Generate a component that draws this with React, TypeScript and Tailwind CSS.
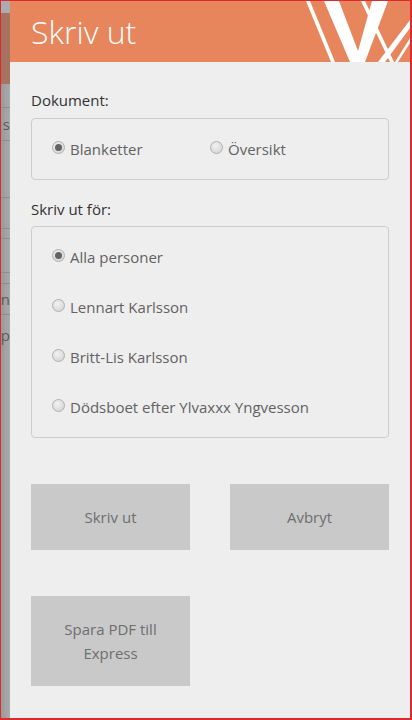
const font = "[font-family:'Open_Sans',sans-serif]";

function Radio({ checked }: { checked?: boolean }) {
  return (
    <span className="mb-[3px] flex h-[13px] w-[13px] shrink-0 items-center justify-center rounded-full border border-[#b0b0b0] bg-[radial-gradient(circle_at_40%_35%,#f2f2f2,#cfcfcf)]">
      {checked && <span className="h-[7px] w-[7px] rounded-full bg-[#636363]" />}
    </span>
  );
}

function Option({ label, checked, className = "" }: { label: string; checked?: boolean; className?: string }) {
  return (
    <div className={`flex items-center gap-[5px] text-[15px] leading-[20px] text-[#626262] ${className}`}>
      <Radio checked={checked} />
      <span>{label}</span>
    </div>
  );
}

function Btn({ children, className = "" }: { children: React.ReactNode; className?: string }) {
  return (
    <div className={`flex w-[159px] items-center justify-center bg-[#c9c9c9] text-center text-[15px] leading-[24px] text-[#6e6e6e] ${className}`}>
      {children}
    </div>
  );
}

function Strip() {
  const line = "border-b border-[#8e8e8e]";
  return (
    <div className="flex h-full w-[9px] shrink-0 flex-col overflow-hidden bg-gradient-to-r from-[#9a9a9a] to-[#aaaaaa] text-[15px] leading-[20px] text-[#5c5c5c]">
      <div className="h-[12px] shrink-0 bg-[#a9adb0]" />
      <div className="h-[71px] shrink-0 bg-[#a5735f]" />
      <div className={`h-[24px] shrink-0 ${line}`} />
      <div className={`flex h-[33px] shrink-0 items-center justify-end ${line}`}>s</div>
      <div className={`h-[57px] shrink-0 ${line}`} />
      <div className={`h-[31px] shrink-0 ${line}`} />
      <div className={`h-[10px] shrink-0 ${line}`} />
      <div className={`h-[34px] shrink-0 ${line}`} />
      <div className={`h-[11px] shrink-0 ${line}`} />
      <div className={`flex h-[31px] shrink-0 items-center justify-end ${line}`}>n</div>
      <div className="flex h-[40px] shrink-0 items-center justify-end">p</div>
    </div>
  );
}

function Logo() {
  return (
    <svg width="110" height="61" viewBox="0 0 110 61" className="absolute right-0 top-0">
      <g fill="#ffffff">
        <polygon points="6,0 10,0 35,61 31,61" />
        <polygon points="24,0 39,0 58,50 72,0 88,0 65,61 50,61" />
        <polygon points="61,0 65,0 94,61 90,61" />
        <polygon points="110,19 110,27 85,61 78,61" />
        <polygon points="110,37 110,42 98,61 95,61" />
      </g>
    </svg>
  );
}

export default function App() {
  return (
    <div className={`flex h-[720px] w-[412px] overflow-hidden border border-r-2 border-b-2 border-[#dc2a2e] bg-[#eeeeee] ${font}`}>
      <Strip />
      <div className="flex min-w-0 flex-1 flex-col">
        <div className="relative flex h-[61px] shrink-0 items-center overflow-hidden bg-[#e7855c] pl-[21px]">
          <h1 className="text-[32px] font-light leading-[50px] text-white">Skriv ut</h1>
          <Logo />
        </div>
        <div className="flex flex-1 flex-col pl-[21px] pr-[21px]">
          <p className="mt-[28px] text-[15px] leading-[20px] text-[#333333]">Dokument:</p>
          <div className="mt-[8px] flex h-[62px] items-center rounded-[4px] border border-[#cccccc] pl-[20px]">
            <Option label="Blanketter" checked className="w-[158px]" />
            <Option label="Översikt" />
          </div>
          <p className="mt-[19px] text-[15px] leading-[20px] text-[#333333]">Skriv ut för:</p>
          <div className="mt-[7px] flex h-[212px] flex-col justify-between rounded-[4px] border border-[#cccccc] py-[20px] pl-[20px]">
            <Option label="Alla personer" checked />
            <Option label="Lennart Karlsson" />
            <Option label="Britt-Lis Karlsson" />
            <Option label="Dödsboet efter Ylvaxxx Yngvesson" />
          </div>
          <div className="mt-[46px] flex justify-between">
            <Btn className="h-[66px]">Skriv ut</Btn>
            <Btn className="h-[66px]">Avbryt</Btn>
          </div>
          <Btn className="mt-[46px] h-[90px] px-6">Spara PDF till Express</Btn>
        </div>
      </div>
    </div>
  );
}
